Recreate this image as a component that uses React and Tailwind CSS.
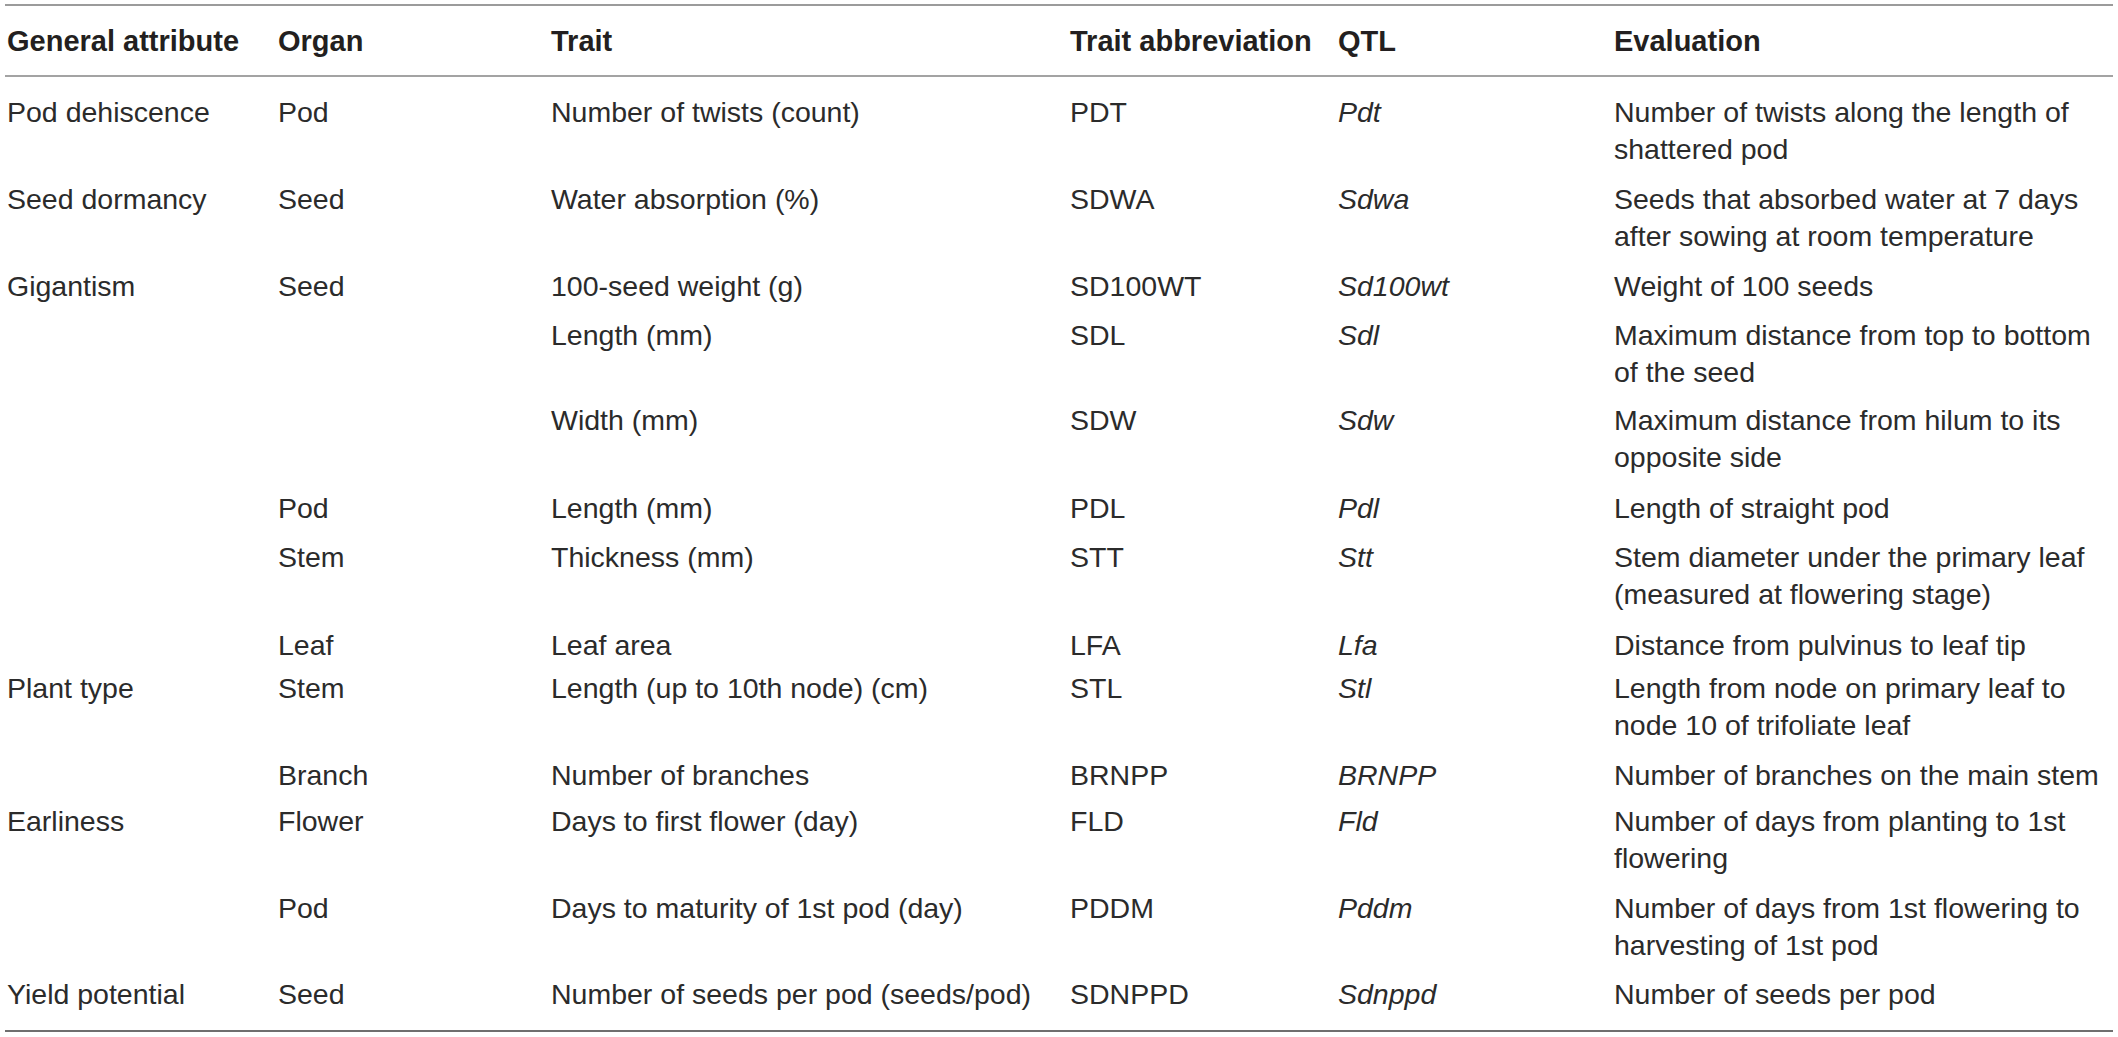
import React from "react";

const rows = [
  { h: "h-[87px]", c: ["Pod dehiscence", "Pod", "Number of twists (count)", "PDT", "Pdt", "Number of twists along the length of shattered pod"] },
  { h: "h-[87px]", c: ["Seed dormancy", "Seed", "Water absorption (%)", "SDWA", "Sdwa", "Seeds that absorbed water at 7 days after sowing at room temperature"] },
  { h: "h-[49px]", c: ["Gigantism", "Seed", "100-seed weight (g)", "SD100WT", "Sd100wt", "Weight of 100 seeds"] },
  { h: "h-[85px]", c: ["", "", "Length (mm)", "SDL", "Sdl", "Maximum distance from top to bottom of the seed"] },
  { h: "h-[88px]", c: ["", "", "Width (mm)", "SDW", "Sdw", "Maximum distance from hilum to its opposite side"] },
  { h: "h-[49px]", c: ["", "Pod", "Length (mm)", "PDL", "Pdl", "Length of straight pod"] },
  { h: "h-[88px]", c: ["", "Stem", "Thickness (mm)", "STT", "Stt", "Stem diameter under the primary leaf (measured at flowering stage)"] },
  { h: "h-[43px]", c: ["", "Leaf", "Leaf area", "LFA", "Lfa", "Distance from pulvinus to leaf tip"] },
  { h: "h-[87px]", c: ["Plant type", "Stem", "Length (up to 10th node) (cm)", "STL", "Stl", "Length from node on primary leaf to node 10 of trifoliate leaf"] },
  { h: "h-[46px]", c: ["", "Branch", "Number of branches", "BRNPP", "BRNPP", "Number of branches on the main stem"] },
  { h: "h-[87px]", c: ["Earliness", "Flower", "Days to first flower (day)", "FLD", "Fld", "Number of days from planting to 1st flowering"] },
  { h: "h-[86px]", c: ["", "Pod", "Days to maturity of 1st pod (day)", "PDDM", "Pddm", "Number of days from 1st flowering to harvesting of 1st pod"] },
  { h: "h-[71px]", c: ["Yield potential", "Seed", "Number of seeds per pod (seeds/pod)", "SDNPPD", "Sdnppd", "Number of seeds per pod"] },
];

const headers = ["General attribute", "Organ", "Trait", "Trait abbreviation", "QTL", "Evaluation"];

const gridCols = "grid grid-cols-[271px_273px_519px_268px_276px_1fr]";

export default function App() {
  return (
    <div className="min-h-[1037px] w-[2118px] bg-white pt-[4px] px-[5px] font-['Liberation_Sans',Arial,sans-serif] text-[28.5px] leading-[37px] text-[#2b2b2b]">
      <div className="border-t-2 border-b-2 border-t-[#9b9b9b] border-b-[#6f6f6f]">
        <div className={`${gridCols} h-[71px] border-b-2 border-[#a3a3a3] pt-[17px] text-[29px] font-bold text-[#231f20]`}>
          {headers.map((h) => (
            <div key={h} className="pl-[2px] whitespace-nowrap">{h}</div>
          ))}
        </div>
        {rows.map((r, i) => (
          <div key={i} className={`${gridCols} ${r.h} pt-[17px]`}>
            {r.c.map((t, j) => (
              <div key={j} className={`pl-[2px] ${j === 4 ? "italic" : ""}`}>{t}</div>
            ))}
          </div>
        ))}
      </div>
    </div>
  );
}
